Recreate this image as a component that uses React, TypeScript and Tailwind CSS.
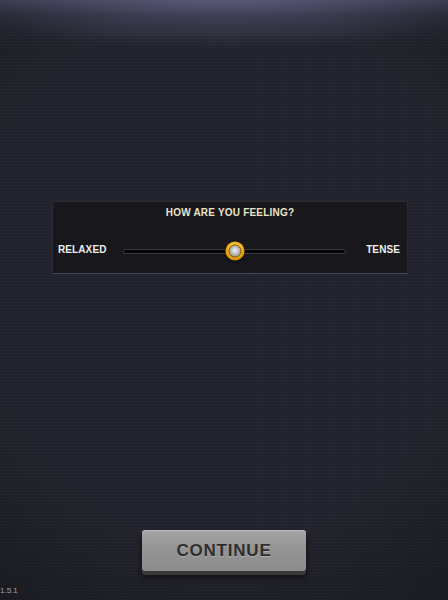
export default function App() {
  const font = { fontFamily: '"Liberation Sans", Arial, sans-serif' };

  return (
    <div
      className="relative w-[448px] h-[600px] overflow-hidden bg-[#23232d] flex flex-col"
      style={font}
    >
      {/* texture + glows */}
      <div className="absolute inset-0 bg-[repeating-linear-gradient(0deg,rgba(255,255,255,0.018)_0px,rgba(255,255,255,0.018)_1px,transparent_1px,transparent_3px),repeating-linear-gradient(90deg,rgba(0,0,0,0.05)_0px,rgba(0,0,0,0.05)_1px,transparent_1px,transparent_3px)]" />
      <div className="absolute inset-x-0 top-0 h-[45px] bg-[linear-gradient(180deg,rgba(105,105,145,0.5)_0%,rgba(80,80,115,0.22)_35%,transparent_100%)]" />
      <div className="absolute inset-x-0 top-0 h-[50px] bg-[radial-gradient(ellipse_60%_100%_at_50%_0%,rgba(130,130,175,0.3),transparent_100%)]" />
      <div className="absolute inset-0 bg-[radial-gradient(ellipse_95%_75%_at_50%_45%,transparent_60%,rgba(0,0,0,0.35)_100%)]" />

      <div className="relative h-[201px] shrink-0" />

      {/* feeling panel */}
      <div className="relative ml-[52px] w-[356px] h-[73px] bg-[#17171c] border border-[#2a2a35] border-b-[#4a4a66] flex flex-col">
        <div className="pt-[5px] text-center text-[10px] leading-[12px] font-bold tracking-[0.2px] text-[#ece3c6]">
          HOW ARE YOU FEELING?
        </div>
        <div className="flex items-center h-[20px] mt-[22px] pl-[5px] pr-[7px]">
          <span className="w-[65px] mb-[2px] text-[10px] leading-[12px] font-bold tracking-[0.1px] text-[#eeeeee]">
            RELAXED
          </span>
          <div className="relative flex-1 h-[5px] bg-[#050506] border border-[#3a3a44] rounded-[2px]">
            <div className="absolute left-1/2 top-1/2 -translate-x-1/2 -translate-y-1/2 w-[19px] h-[19px] rounded-full bg-[radial-gradient(circle_at_50%_35%,#ffd75a,#e8a40c_60%,#a86a00)] shadow-[0_1px_2px_rgba(0,0,0,0.8)] flex items-center justify-center">
              <div className="w-[13px] h-[13px] rounded-full bg-[radial-gradient(circle_at_50%_45%,#f4f4f4_0%,#c8c8c8_35%,#9a9a9a_75%,#6e6e6e_100%)] border border-[#7a5a10]" />
            </div>
          </div>
          <span className="ml-[20px] mb-[2px] text-[10px] leading-[12px] font-bold tracking-[0.1px] text-[#eeeeee]">
            TENSE
          </span>
        </div>
      </div>

      <div className="flex-1" />

      {/* continue button */}
      <div className="relative mb-[29px] ml-[142px] w-[164px]">
        <div className="h-[41px] rounded-[3px] bg-[linear-gradient(180deg,#a4a4a4_0%,#959595_40%,#8c8c8c_100%)] border-t border-[#bcbcbc] flex items-center justify-center shadow-[0_4px_0_#383838,0_6px_6px_rgba(0,0,0,0.6)]">
          <span className="text-[17px] font-bold text-[#2e2e2e] tracking-[0.8px] [text-shadow:0_1px_0_rgba(255,255,255,0.25)]">
            CONTINUE
          </span>
        </div>
      </div>

      <div className="absolute left-0 bottom-[3px] text-[8px] text-[#a0a0a8]">1.5.1</div>
    </div>
  );
}
